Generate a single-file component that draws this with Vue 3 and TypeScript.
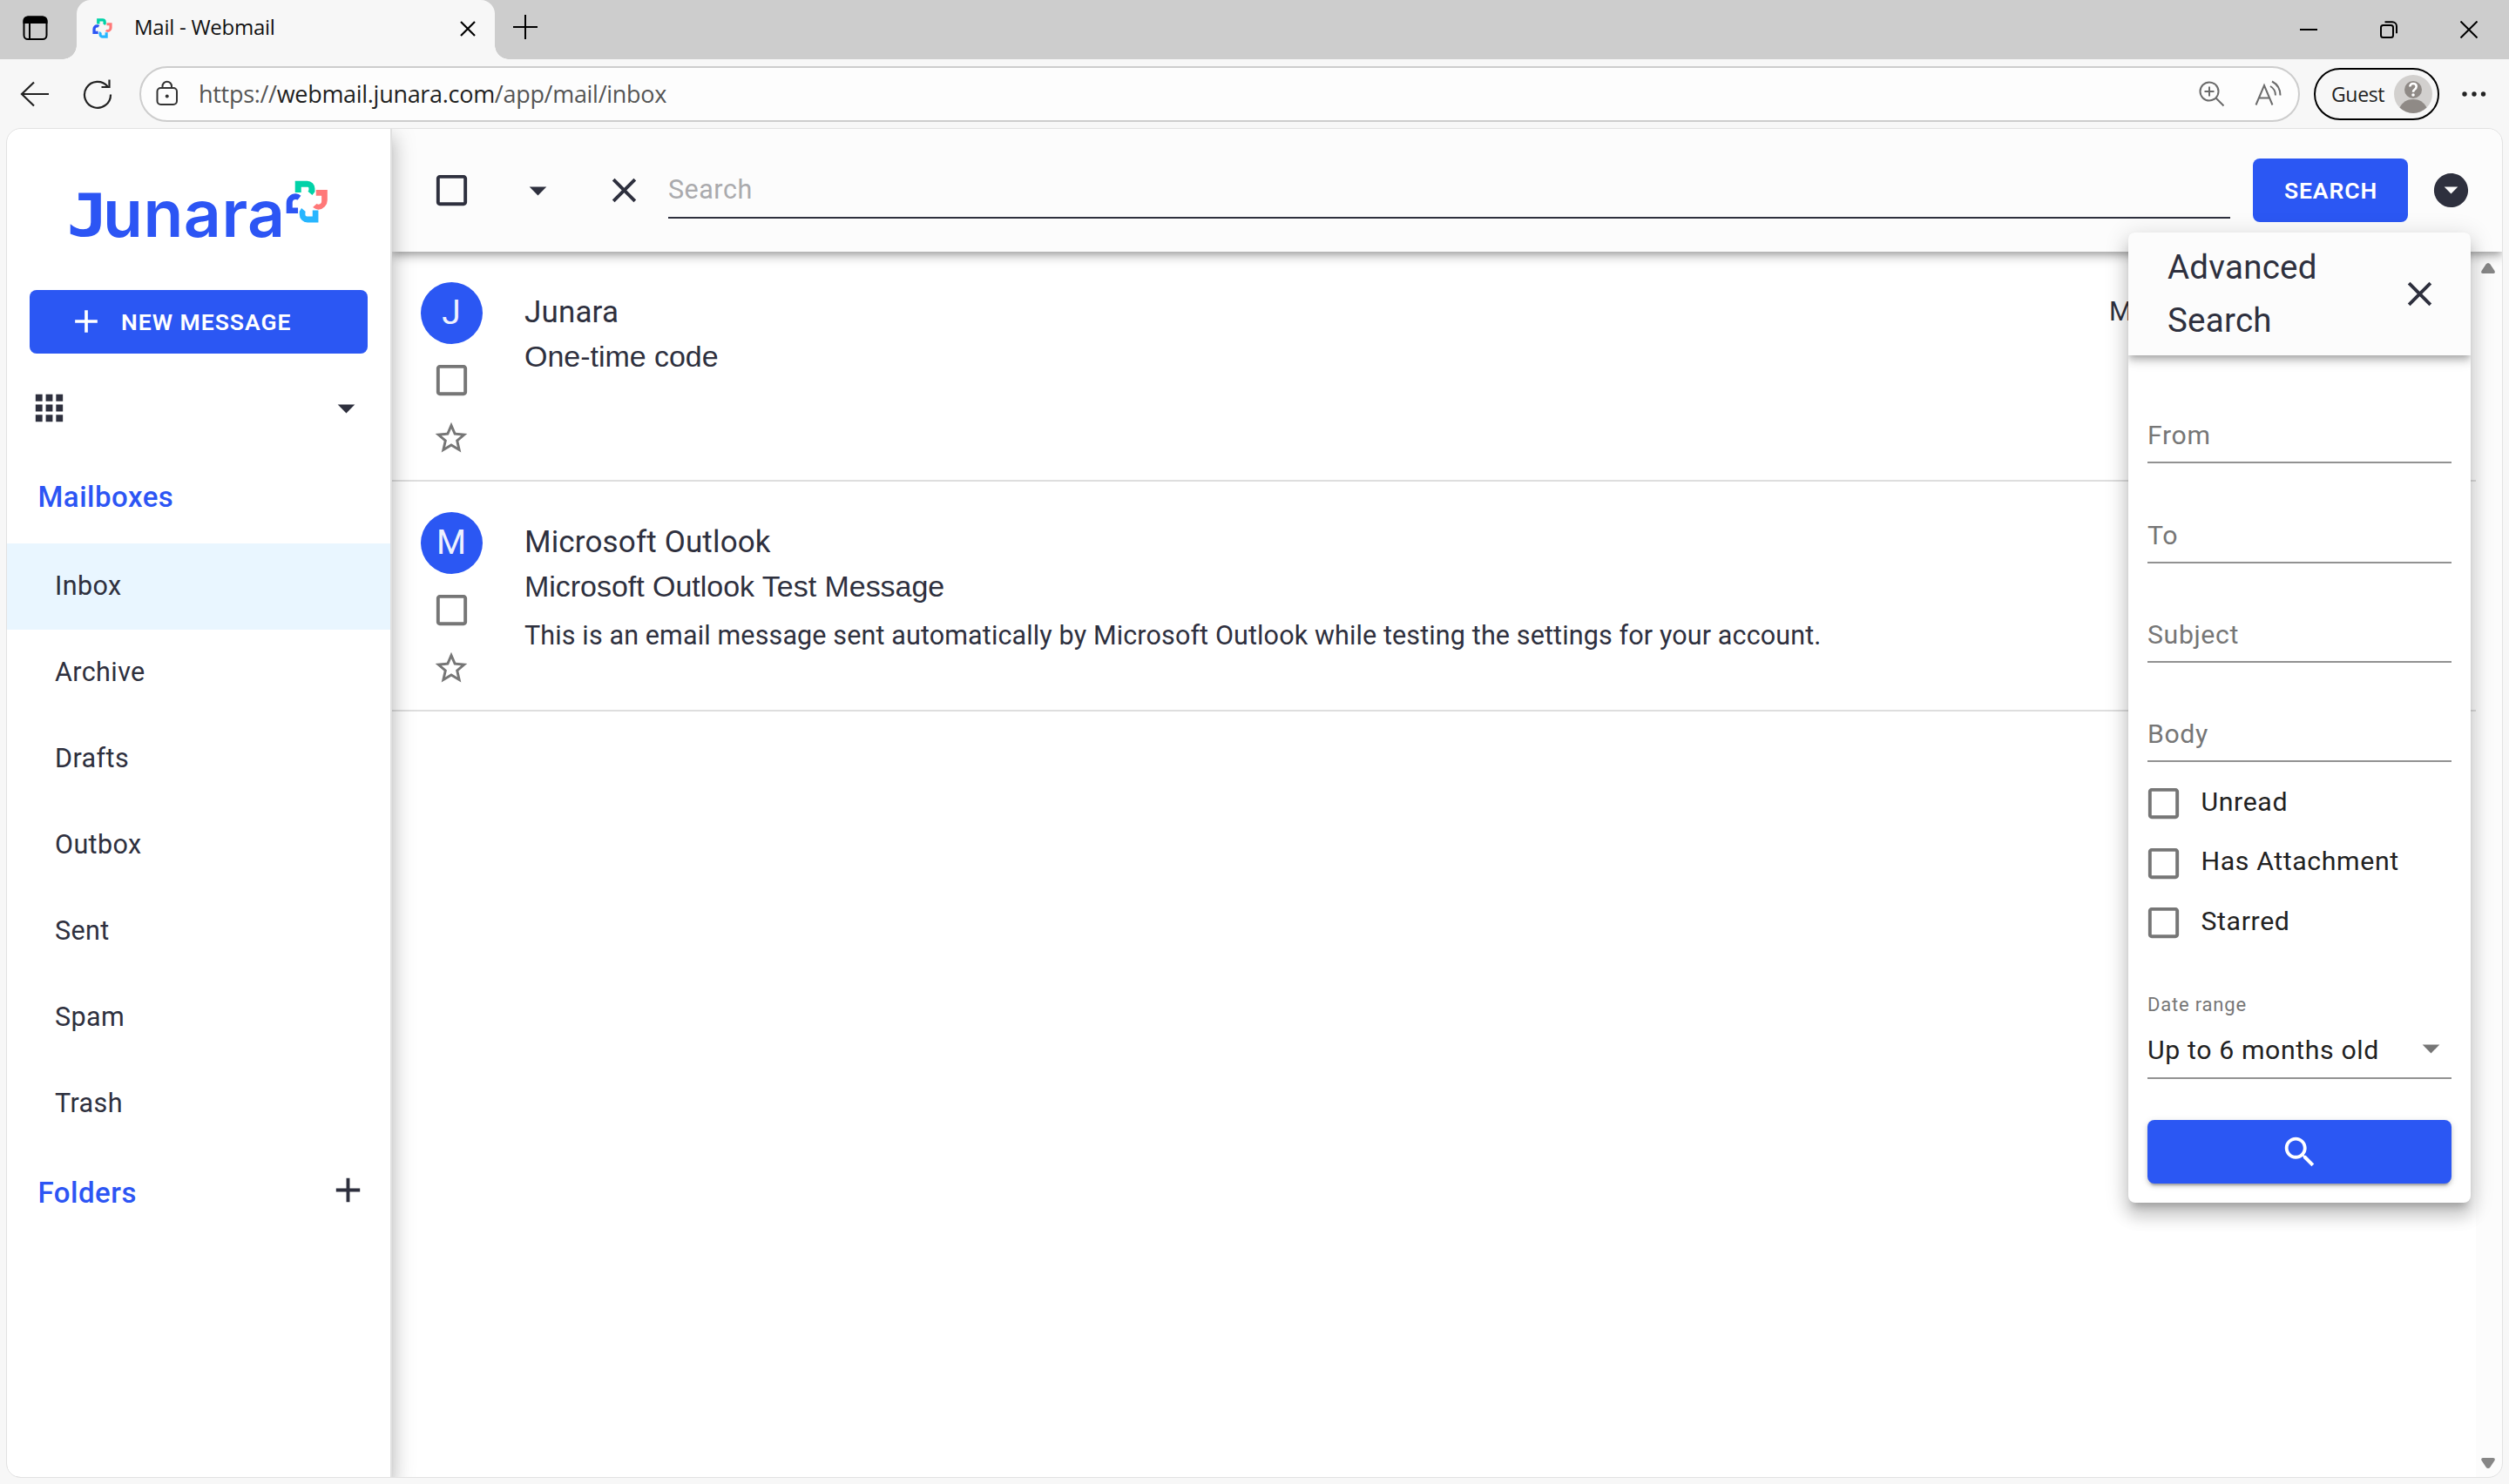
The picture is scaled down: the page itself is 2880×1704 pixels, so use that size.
<script setup lang="ts">
import { ref } from 'vue'

interface Message {
  initial: string
  sender: string
  subject: string
  preview: string
  date: string
}

const mailboxes: string[] = ['Inbox', 'Archive', 'Drafts', 'Outbox', 'Sent', 'Spam', 'Trash']
const activeMailbox = ref('Inbox')

const messages: Message[] = [
  { initial: 'J', sender: 'Junara', subject: 'One-time code', preview: '', date: 'M' },
  {
    initial: 'M',
    sender: 'Microsoft Outlook',
    subject: 'Microsoft Outlook Test Message',
    preview:
      'This is an email message sent automatically by Microsoft Outlook while testing the settings for your account.',
    date: '',
  },
]

const fields: string[] = ['From', 'To', 'Subject', 'Body']
const filters: string[] = ['Unread', 'Has Attachment', 'Starred']

const icons = {
  box: 'M19 5v14H5V5h14m0-2H5c-1.1 0-2 .9-2 2v14c0 1.1.9 2 2 2h14c1.1 0 2-.9 2-2V5c0-1.1-.9-2-2-2z',
  caret: 'M7 10l5 5 5-5z',
  close: 'M19 6.41L17.59 5 12 10.59 6.41 5 5 6.41 10.59 12 5 17.59 6.41 19 12 13.41 17.59 19 19 17.59 13.41 12z',
  plus: 'M19 13h-6v6h-2v-6H5v-2h6V5h2v6h6v2z',
  star: 'M22 9.24l-7.19-.62L12 2 9.19 8.63 2 9.24l5.46 4.73L5.82 21 12 17.27 18.18 21l-1.63-7.03L22 9.24zM12 15.4l-3.76 2.27 1-4.28-3.32-2.88 4.38-.38L12 6.1l1.71 4.04 4.38.38-3.32 2.88 1 4.28L12 15.4z',
  search:
    'M15.5 14h-.79l-.28-.27C15.41 12.59 16 11.11 16 9.5 16 5.91 13.09 3 9.5 3S3 5.91 3 9.5 5.91 16 9.5 16c1.61 0 3.09-.59 4.23-1.57l.27.28v.79l5 4.99L20.49 19l-4.99-5zm-6 0C7.01 14 5 11.99 5 9.5S7.01 5 9.5 5 14 7.01 14 9.5 11.99 14 9.5 14z',
  apps: 'M4 8h4V4H4v4zm6 12h4v-4h-4v4zm-6 0h4v-4H4v4zm0-6h4v-4H4v4zm6 0h4v-4h-4v4zm6-10v4h4V4h-4zm-6 4h4V4h-4v4zm6 6h4v-4h-4v4zm0 6h4v-4h-4v4z',
  circle: 'M12 2C6.48 2 2 6.48 2 12s4.48 10 10 10 10-4.48 10-10S17.52 2 12 2zm0 12l-4-4h8l-4 4z',
}

/* The four brackets of the Junara mark, drawn on a 145 x 146 grid. */
const markParts = [
  { fill: '#00d2a8', d: 'M32 2H74A27 27 0 0 1 100 28V40L91 51L76 38Q79 36 79 32V27Q79 23 75 23H53V42H32Z' },
  { fill: '#ff7878', d: 'M104 33H143V68A33 33 0 0 1 112 101Q101 100 93 93L106 81Q110 83 113 83Q123 82 123 72V53H104Z' },
  { fill: '#27b6ff', d: 'M112 103V145H76A28 28 0 0 1 47 116V107L54 96L68 108Q67 110 67 113V118Q67 124 73 124H92V103Z' },
  { fill: '#2c55f4', d: 'M2 114V79A32 32 0 0 1 35 46Q45 47 52 53L41 67Q38 66 34 66Q23 67 23 77V94H42V114Z' },
]
</script>

<template>
  <div class="window">
    <header class="tabstrip">
      <div class="tab-actions">
        <svg width="30" height="30" viewBox="0 0 30 30" fill="none" stroke="#000" stroke-width="2">
          <rect x="2.5" y="2.5" width="26" height="25.5" rx="4.5" />
          <path d="M2.5 9V7a4.5 4.5 0 0 1 4.500-4.500h17a4.500 4.500 0 0 1 4.500 4.500v2z" fill="#000" />
          <path d="M9 9v19" />
        </svg>
      </div>
      <div class="tab">
        <svg class="favicon" width="23" height="23" viewBox="0 0 145 146">
          <path v-for="p in markParts" :key="p.fill" :fill="p.fill" :d="p.d" />
        </svg>
        <span class="tab-title">Mail - Webmail</span>
        <svg class="tab-close" width="18" height="18" viewBox="0 0 18 18" stroke="#000" stroke-width="2.2">
          <path d="M1 1l16 16M17 1L1 17" />
        </svg>
      </div>
      <svg class="new-tab" width="28" height="28" viewBox="0 0 28 28" stroke="#000" stroke-width="2">
        <path d="M14 0v28M0 14h28" />
      </svg>
      <div class="window-controls">
        <svg width="20" height="20" viewBox="0 0 20 20" stroke="#000" stroke-width="2"><path d="M0 10h20" /></svg>
        <svg width="20" height="20" viewBox="0 0 20 20" fill="none" stroke="#000" stroke-width="2">
          <rect x="1" y="5" width="14" height="14" rx="2.500" />
          <path d="M5.500 1.200H14a5 5 0 0 1 5 5v8" />
        </svg>
        <svg width="20" height="20" viewBox="0 0 20 20" stroke="#000" stroke-width="2"><path d="M.5.5l19 19M19.500.5l-19 19" /></svg>
      </div>
    </header>

    <div class="addressbar">
      <svg class="back" width="34" height="32" viewBox="0 0 34 32" fill="none" stroke="#222" stroke-width="2.200">
        <path d="M16 2.500L2 16 16 29.500M2 16h31" />
      </svg>
      <svg class="reload" width="34" height="36" viewBox="0 0 34 36" fill="none" stroke="#222" stroke-width="2.200">
        <path d="M32 18.500A15 15 0 1 1 28.500 9.200" />
        <path d="M30.500 1.500V10H21.500" />
      </svg>
      <div class="url-pill">
        <svg class="lock" width="26" height="30" viewBox="0 0 26 30" fill="none" stroke="#333" stroke-width="2">
          <rect x="1.500" y="9" width="22.500" height="19" rx="4" />
          <path d="M7.500 9V7a5.200 5.200 0 0 1 10.500 0v2" />
          <circle cx="12.750" cy="18.500" r="2" fill="#333" stroke="none" />
        </svg>
        <span class="url">https://<b>webmail.junara.com</b>/app/mail/inbox</span>
        <svg class="zoom" width="30" height="30" viewBox="0 0 30 30" fill="none" stroke="#6b6b6b" stroke-width="2">
          <circle cx="12" cy="12" r="10.500" />
          <path d="M12 6.500v11M6.500 12h11M19.500 19.500L28.500 28.500" />
        </svg>
        <svg class="read" width="32" height="30" viewBox="0 0 32 30" fill="none" stroke="#6b6b6b" stroke-width="2">
          <path d="M1.500 28.500L11 6l9.500 22.500M5 20.500h12" />
          <path d="M18 7q6 3.500 6 10.500M20 1.500q9.500 5 9.500 16" />
        </svg>
      </div>
      <div class="guest">
        <span>Guest</span>
        <svg width="44" height="44" viewBox="0 0 44 44">
          <circle cx="22" cy="22" r="22" fill="#d2d0ce" />
          <path d="M6.500 37.500C10 31 15 28 22 28s12 3 15.500 9.500A22 22 0 0 1 6.500 37.500z" fill="#8f8a86" />
          <circle cx="22" cy="17" r="10" fill="#8f8a86" />
          <path d="M18.300 13.500q.3-3.500 3.700-3.500 3.700 0 3.700 3.300 0 2-2 3.400-1.700 1.200-1.700 3" fill="none" stroke="#fff" stroke-width="2.600" />
          <circle cx="22" cy="23" r="1.800" fill="#fff" />
        </svg>
      </div>
      <svg class="more" width="28" height="8" viewBox="0 0 28 8" fill="#222">
        <circle cx="3" cy="4" r="2.700" /><circle cx="14" cy="4" r="2.700" /><circle cx="24.500" cy="4" r="2.700" />
      </svg>
    </div>

    <div class="page">
      <aside class="sidebar">
        <div class="logo">
          <span class="logo-j">J</span><span class="logo-rest">unara</span>
          <svg class="mark" width="48.500" height="48.800" viewBox="0 0 145 146">
            <path v-for="p in markParts" :key="p.fill" :fill="p.fill" :d="p.d" />
          </svg>
        </div>
        <button class="compose">
          <svg width="44" height="44" viewBox="0 0 24 24"><path :d="icons.plus" /></svg>
          <span>NEW MESSAGE</span>
        </button>
        <div class="apps-row">
          <svg class="ic" viewBox="0 0 24 24"><path :d="icons.apps" /></svg>
          <svg class="ic" viewBox="0 0 24 24"><path :d="icons.caret" /></svg>
        </div>
        <h2 class="section">Mailboxes</h2>
        <nav>
          <a v-for="m in mailboxes" :key="m" class="nav-item" :class="{ active: m === activeMailbox }" @click="activeMailbox = m">{{ m }}</a>
        </nav>
        <div class="folders">
          <h2>Folders</h2>
          <svg class="ic" viewBox="0 0 24 24"><path :d="icons.plus" /></svg>
        </div>
      </aside>

      <main class="main">
        <div class="toolbar">
          <svg class="ic" viewBox="0 0 24 24"><path :d="icons.box" /></svg>
          <svg class="ic" viewBox="0 0 24 24"><path :d="icons.caret" /></svg>
          <svg class="ic" viewBox="0 0 24 24"><path :d="icons.close" /></svg>
          <div class="search-field">Search</div>
          <button class="search-btn">SEARCH</button>
          <svg class="ic" viewBox="0 0 24 24"><path :d="icons.circle" /></svg>
        </div>
        <div class="content">
          <div class="list">
            <article v-for="m in messages" :key="m.sender" class="row">
              <div class="row-tools">
                <div class="avatar">{{ m.initial }}</div>
                <svg class="ic row-box" viewBox="0 0 24 24"><path :d="icons.box" /></svg>
                <svg class="row-star" width="44" height="44" viewBox="0 0 24 24"><path :d="icons.star" /></svg>
              </div>
              <div class="row-text">
                <div class="sender">{{ m.sender }}</div>
                <div class="subject">{{ m.subject }}</div>
                <div class="preview">{{ m.preview }}</div>
              </div>
              <div class="row-date">{{ m.date }}</div>
            </article>
          </div>
          <div class="scrollbar">
            <svg width="16" height="12" viewBox="0 0 16 12"><path d="M8 0Q9.500 0 10.500 1.500L15.500 9Q16.500 12 14 12H2Q-.5 12 .5 9L5.500 1.500Q6.500 0 8 0z" /></svg>
            <svg width="16" height="12" viewBox="0 0 16 12"><path d="M8 12Q9.500 12 10.500 10.500L15.500 3Q16.500 0 14 0H2Q-.5 0 .5 3L5.500 10.500Q6.500 12 8 12z" /></svg>
          </div>
        </div>
      </main>

      <section class="panel">
        <div class="panel-head">
          <h3>Advanced Search</h3>
          <svg class="ic" viewBox="0 0 24 24"><path :d="icons.close" /></svg>
        </div>
        <div class="panel-body">
          <div v-for="f in fields" :key="f" class="field"><span>{{ f }}</span></div>
          <div class="filters">
            <label v-for="f in filters" :key="f" class="filter">
              <svg class="ic" viewBox="0 0 24 24"><path :d="icons.box" /></svg>
              <span>{{ f }}</span>
            </label>
          </div>
          <div class="range-label">Date range</div>
          <div class="range">
            <span>Up to 6 months old</span>
            <svg class="ic" viewBox="0 0 24 24"><path :d="icons.caret" /></svg>
          </div>
          <button class="go">
            <svg width="46" height="46" viewBox="0 0 24 24"><path :d="icons.search" /></svg>
          </button>
        </div>
      </section>
    </div>
  </div>
</template>

<style>
body { background: #f7f7f7; overflow: hidden; }
</style>

<style scoped>
* { box-sizing: border-box; }
svg { display: block; flex: none; }
button { border: 0; margin: 0; padding: 0; font-family: inherit; }
h2, h3 { margin: 0; font-weight: 400; }

.window {
  width: 2880px;
  height: 1704px;
  background: #f7f7f7;
  font-family: Roboto, sans-serif;
  color: #2e303e;
  display: flex;
  flex-direction: column;
  overflow: hidden;
}

.tabstrip { height: 68px; flex: none; background: #cdcdcd; display: flex; }
.tab-actions { width: 88px; padding: 16.500px 0 0 24.500px; }
.tab {
  position: relative;
  width: 480px;
  height: 68px;
  background: #f7f7f7;
  border-radius: 16px 16px 0 0;
  display: flex;
  align-items: center;
  padding: 0 22px 4px 18px;
}
.tab::before, .tab::after { content: ''; position: absolute; bottom: 0; width: 16px; height: 16px; }
.tab::before { left: -16px; background: radial-gradient(circle at 0 0, #cdcdcd 15.500px, #f7f7f7 16px); }
.tab::after { right: -16px; background: radial-gradient(circle at 100% 0, #cdcdcd 15.500px, #f7f7f7 16px); }
.tab-title { margin-left: 25px; margin-top: -2px; font: 24px/36px "Open Sans", sans-serif; letter-spacing: -0.260px; color: #111; }
.tab-close { margin-left: auto; margin-top: 2px; }
.new-tab { margin: 17px 0 0 21px; }
.window-controls { margin-left: auto; display: flex; gap: 72px; padding: 24px 36px 0 0; }

.addressbar { height: 80px; flex: none; display: flex; align-items: center; }
.back { margin-left: 23px; }
.reload { margin-left: 38px; }
.url-pill {
  margin-left: 31px;
  width: 2480px;
  height: 64px;
  border: 2px solid #cdcdcd;
  border-radius: 32px;
  background: #fdfdfd;
  display: flex;
  align-items: center;
}
.lock { margin-left: 17px; margin-top: -3px; }
.url { margin-left: 23px; font: 27px/40px "Open Sans", sans-serif; letter-spacing: -0.300px; color: #555; white-space: nowrap; }
.url b { font-weight: 400; color: #1f1f1f; }
.zoom { margin-left: auto; }
.read { margin-left: 34px; margin-right: 18.500px; margin-top: -3px; }
.guest {
  margin-left: 16px;
  width: 144px;
  height: 60px;
  border: 2px solid #000;
  border-radius: 30px;
  display: flex;
  align-items: center;
  justify-content: space-between;
  padding: 0 6px 0 18px;
  font: 23px/36px "Open Sans", sans-serif;
  letter-spacing: -0.350px;
  color: #222;
}
.more { margin-left: 26px; }

.page {
  position: relative;
  margin: 0 8px;
  height: 1548px;
  flex: none;
  border-radius: 16px;
  overflow: hidden;
  background: #fff;
  display: flex;
  outline: 1px solid #e2e2e2;
}
.ic { width: 47px; height: 47px; fill: #2e303e; }

.sidebar {
  position: relative;
  z-index: 2;
  width: 442px;
  flex: none;
  background: #fff;
  border-right: 2px solid #e0e0e0;
  box-shadow: 0 9px 9px -5.500px rgba(0, 0, 0, .2), 0 15px 18px 2px rgba(0, 0, 0, .14), 0 5.500px 26px 4px rgba(0, 0, 0, .12);
}
.logo { height: 185px; display: flex; align-items: flex-start; padding-left: 72px; color: #2c55f4; }
.logo-j {
  width: 38px;
  margin-top: 60px;
  font: 700 67px/80px "DejaVu Sans Mono", monospace;
  transform: scaleX(1.190);
}
.logo-rest { margin-top: 57px; font: 600 75px/80px Inter, sans-serif; letter-spacing: .500px; }
.mark { margin-top: 59px; }
.compose {
  width: 388px;
  height: 73px;
  margin-left: 26px;
  border-radius: 8px;
  background: #2b57f3;
  color: #fff;
  font-size: 26.500px;
  font-weight: 600;
  letter-spacing: 1px;
  display: flex;
  align-items: center;
  padding-left: 43px;
}
.compose svg { fill: #fff; margin-top: -2px; }
.compose span { margin-left: 18px; }
.apps-row { height: 126px; display: flex; align-items: center; justify-content: space-between; padding: 0 27.500px 1px 25px; }
.section { height: 92px; padding: 0 0 14px 35.500px; line-height: 78px; }
.section, .folders h2 { font-size: 33px; font-weight: 500; letter-spacing: .500px; color: #2c55f4; }
.nav-item { display: block; height: 99px; line-height: 98px; padding-left: 55px; font-size: 30.500px; letter-spacing: .400px; }
.nav-item.active { background: #e9f6ff; }
.folders { height: 99px; display: flex; align-items: center; justify-content: space-between; padding: 0 17.500px 0 35.500px; }
.folders h2 { padding-top: 6px; }
.folders .ic { margin-right: 8px; }

.main { flex: 1; min-width: 0; display: flex; flex-direction: column; background: #fff; }
.toolbar {
  position: relative;
  z-index: 1;
  height: 141px;
  flex: none;
  background: #fcfcfc;
  display: flex;
  align-items: center;
  padding-left: 45px;
  padding-bottom: 1px;
  box-shadow: 0 4px 7px -2px rgba(0, 0, 0, .2), 0 7px 9px 0 rgba(0, 0, 0, .14), 0 2px 18px 0 rgba(0, 0, 0, .12);
}
.toolbar .ic + .ic { margin-left: 52px; }
.search-field {
  margin: 1px 0 0 27px;
  width: 1793px;
  height: 65px;
  border-bottom: 2px solid #2e303e;
  line-height: 63px;
  font-size: 30.500px;
  letter-spacing: .500px;
  color: #aaaaad;
}
.search-btn {
  margin: 1px 0 0 26px;
  width: 178px;
  height: 73px;
  border-radius: 8px;
  background: #2b57f3;
  color: #fff;
  font-size: 26.500px;
  font-weight: 600;
  letter-spacing: .900px;
  padding-left: 1px;
}
.search-btn + .ic { margin-left: 26px; }

.content { flex: 1; display: flex; }
.list { flex: 1; min-width: 0; }
.row { height: 264px; border-bottom: 2px solid #dedede; display: flex; }
.row-tools { width: 136px; padding-top: 35px; display: flex; flex-direction: column; align-items: center; }
.avatar {
  width: 71px;
  height: 71px;
  border-radius: 50%;
  background: #2b57f3;
  color: #eef1fe;
  font-size: 39px;
  line-height: 70px;
  text-align: center;
}
.row-box { margin-top: 18px; fill: #767676; }
.row-star { margin-top: 20.500px; fill: #767676; }
.row-text { margin-left: 16px; padding-top: 44.500px; white-space: nowrap; }
.sender { font-size: 35px; line-height: 50px; letter-spacing: .150px; }
.subject { font: 34px/51px "Liberation Sans", Arial, sans-serif; letter-spacing: -.030px; }
.preview { font-size: 30.500px; line-height: 56px; letter-spacing: .125px; margin-top: 3px; }
.row-date { width: 421px; margin-left: auto; padding-top: 43.500px; font-size: 30.500px; line-height: 50px; }
.scrollbar {
  width: 30px;
  background: #fcfcfc;
  display: flex;
  flex-direction: column;
  justify-content: space-between;
  align-items: center;
  padding: 13px 2px 10px 0;
  fill: #868686;
}

.panel {
  position: absolute;
  z-index: 3;
  left: 2435px;
  top: 119px;
  width: 393px;
  height: 1114px;
  border-radius: 8px;
  background: #fff;
  box-shadow: 0 9px 9px -5.500px rgba(0, 0, 0, .2), 0 15px 18px 2px rgba(0, 0, 0, .14), 0 5.500px 26px 4px rgba(0, 0, 0, .12);
  overflow: hidden;
}
.panel-head {
  position: relative;
  height: 141px;
  background: #fcfcfc;
  display: flex;
  align-items: center;
  justify-content: space-between;
  padding: 0 35px 2px 45px;
  box-shadow: 0 4px 7px -2px rgba(0, 0, 0, .2), 0 7px 9px 0 rgba(0, 0, 0, .14), 0 2px 18px 0 rgba(0, 0, 0, .12);
}
.panel-head h3 { width: 200px; font-size: 38.500px; line-height: 61px; letter-spacing: .250px; }
.panel-head .ic { margin-top: 1px; }
.panel-body { padding: 10px 22px 0; color: #212121; font-size: 30.250px; letter-spacing: .620px; }
.field { height: 114.330px; border-bottom: 2px solid #929292; display: flex; align-items: flex-end; color: #767676; }
.field span { line-height: 60px; }
.filters { margin-top: 13px; margin-left: -5px; }
.filter { height: 68.660px; display: flex; align-items: center; }
.filter .ic { fill: #767676; }
.filter span { margin-left: 19.500px; padding-bottom: 5px; }
.range-label { margin-top: 45px; font-size: 22px; line-height: 30px; color: #767676; letter-spacing: .800px; }
.range { height: 70px; border-bottom: 2px solid #929292; display: flex; align-items: center; justify-content: space-between; }
.range span { padding-top: 5px; }
.range .ic { fill: #767676; margin-top: 1px; }
.go {
  margin-top: 47px;
  width: 349px;
  height: 73px;
  border-radius: 8px;
  background: #2b57f3;
  display: flex;
  align-items: center;
  justify-content: center;
  fill: #fff;
  box-shadow: 0 5px 2px -3px rgba(0, 0, 0, .2), 0 3px 4px 0 rgba(0, 0, 0, .14), 0 2px 9px 0 rgba(0, 0, 0, .12);
}
</style>
